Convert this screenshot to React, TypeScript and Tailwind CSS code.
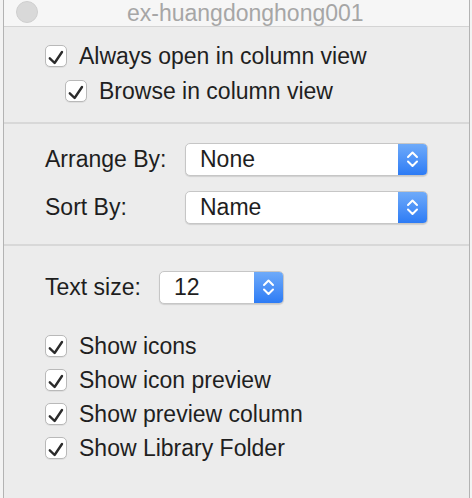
import React from "react";

const font = { fontFamily: '"Liberation Sans", Arial, sans-serif' };

function Check({ label, indent }: { label: string; indent?: boolean }) {
  return (
    <div className={`flex items-center h-[22px] leading-[22px] ${indent ? "pl-[61px]" : "pl-[41px]"}`}>
      <div className="w-[22px] h-[22px] rounded-[5px] border border-[#b9b9b9] bg-white shadow-[0_1px_0_rgba(0,0,0,0.06)] flex items-center justify-center shrink-0">
        <svg width="20" height="20" viewBox="0 0 20 20">
          <polyline points="3.8,12.3 8.6,17 16,6" fill="none" stroke="#2b2b2b" strokeWidth="2.4" strokeLinecap="round" strokeLinejoin="round" />
        </svg>
      </div>
      <span className="ml-[12px] text-[23px] text-[#1f1f1f]">{label}</span>
    </div>
  );
}

function Popup({ value, width }: { value: string; width: string }) {
  return (
    <div className={`${width} h-[33px] flex rounded-[5px] border border-[#c6c6c6] bg-white shadow-[0_1px_1px_rgba(0,0,0,0.12)] overflow-hidden`}>
      <div className="flex-1 flex items-center pl-[14px] text-[23px] text-[#1e1e1e] leading-[31px]">{value}</div>
      <div className="w-[29px] h-full bg-gradient-to-b from-[#6eaaf9] to-[#2c7bf5] flex items-center justify-center">
        <svg width="29" height="31" viewBox="0 0 29 31">
          <polyline points="10,13 14.5,8.5 19,13" fill="none" stroke="#fff" strokeWidth="2" strokeLinecap="round" strokeLinejoin="round" />
          <polyline points="10,17.5 14.5,22 19,17.5" fill="none" stroke="#fff" strokeWidth="2" strokeLinecap="round" strokeLinejoin="round" />
        </svg>
      </div>
    </div>
  );
}

export default function App() {
  return (
    <div className="w-[472px] h-[498px] bg-[#f3f3f3] pl-[3px]" style={font}>
      <div className="w-[467px] h-full border-x border-[#b3b3b3] bg-[#ececec] flex flex-col">
        <div className="relative h-[27px] bg-[#f6f6f6] border-b border-[#d4d4d4] flex items-center pl-[123px]">
          <div className="absolute left-[12px] top-[1px] w-[22px] h-[22px] rounded-full bg-[#d9d9d9] border border-[#cfcfcf]" />
          <span className="text-[23px] leading-[26px] text-[#a6a6a6]">ex-huangdonghong001</span>
        </div>

        <div className="pt-[18px] pb-[20px] flex flex-col gap-[13px]">
          <Check label="Always open in column view" />
          <Check label="Browse in column view" indent />
        </div>

        <div className="h-[2px] bg-[#d8d8d8]" />

        <div className="pt-[19px] pb-[20px] flex flex-col gap-[15px] pl-[41px]">
          <div className="flex items-center h-[33px]">
            <span className="w-[140px] text-[23px] leading-[33px] text-[#1e1e1e]">Arrange By:</span>
            <Popup value="None" width="w-[243px]" />
          </div>
          <div className="flex items-center h-[33px]">
            <span className="w-[140px] text-[23px] leading-[33px] text-[#1e1e1e]">Sort By:</span>
            <Popup value="Name" width="w-[243px]" />
          </div>
        </div>

        <div className="h-[2px] bg-[#d8d8d8]" />

        <div className="pt-[25px] flex flex-col">
          <div className="flex items-center h-[33px] pl-[41px]">
            <span className="w-[114px] text-[23px] leading-[33px] text-[#1e1e1e]">Text size:</span>
            <Popup value="12" width="w-[125px]" />
          </div>
          <div className="mt-[31px] flex flex-col gap-[12px]">
            <Check label="Show icons" />
            <Check label="Show icon preview" />
            <Check label="Show preview column" />
            <Check label="Show Library Folder" />
          </div>
        </div>
      </div>
    </div>
  );
}
